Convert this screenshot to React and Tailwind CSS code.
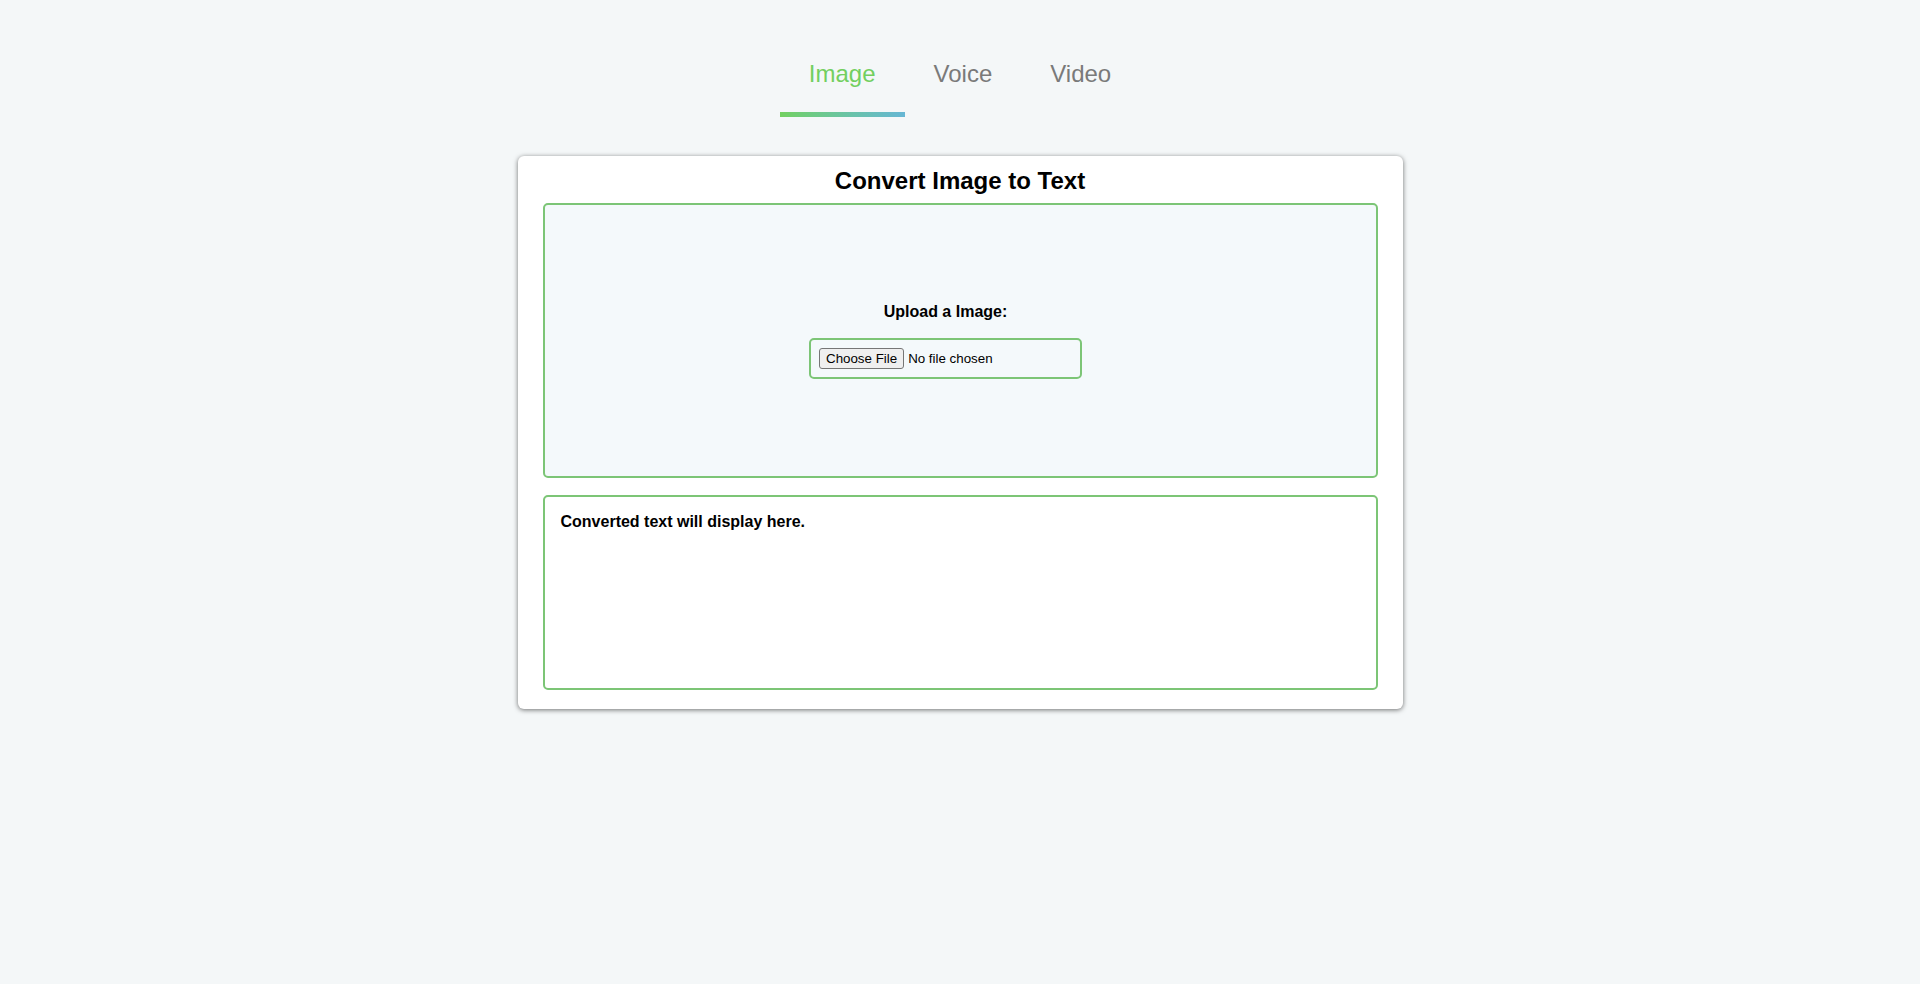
import React from "react";

export default function App() {
  const font = { fontFamily: '"Liberation Sans", Arial, sans-serif' };
  return (
    <div className="min-h-[984px] w-full bg-[#f4f7f8] text-black" style={font}>
      <div className="flex justify-center pt-[60px]">
        <div className="flex flex-col">
          <div className="flex text-[24px] leading-[28px]">
            <div className="px-[29px] text-[#72cf5f]">Image</div>
            <div className="px-[29px] text-[#7a7a7a]">Voice</div>
            <div className="px-[29px] text-[#7a7a7a]">Video</div>
          </div>
          <div className="mt-[24px] h-[5px] w-[125px] bg-gradient-to-r from-[#72d05f] to-[#66b6d4]" />
        </div>
      </div>

      <div className="mt-[39px] flex justify-center">
        <div className="w-[885px] rounded-[6px] bg-white px-[25px] pt-[11px] pb-[19px] shadow-[0_1px_5px_rgba(0,0,0,0.55)]">
          <h2 className="mb-[8px] text-center text-[24px] font-bold leading-[28px]">
            Convert Image to Text
          </h2>
          <div className="flex h-[275px] items-center justify-center rounded-[5px] border-2 border-[#7cc576] bg-[#f4f9fb]">
            <div className="mr-[29px] flex flex-col items-center">
              <label className="mb-[17px] text-[16px] font-bold leading-[18px]">
                Upload a Image:
              </label>
              <input
                type="file"
                className="w-[273px] rounded-[5px] border-2 border-[#7cc576] px-[8px] py-[8px] text-[13.33px] leading-[17px] file:mr-[4px] file:rounded-[3px] file:border file:border-[#767676] file:bg-[#efefef] file:px-[6px] file:py-[1px] file:text-[13.33px] file:text-black"
              />
            </div>
          </div>
          <div className="mt-[17px] h-[195px] rounded-[5px] border-2 border-[#7cc576] bg-white px-4 pt-[16px]">
            <p className="text-[16px] font-bold leading-[18px]">
              Converted text will display here.
            </p>
          </div>
        </div>
      </div>
    </div>
  );
}
